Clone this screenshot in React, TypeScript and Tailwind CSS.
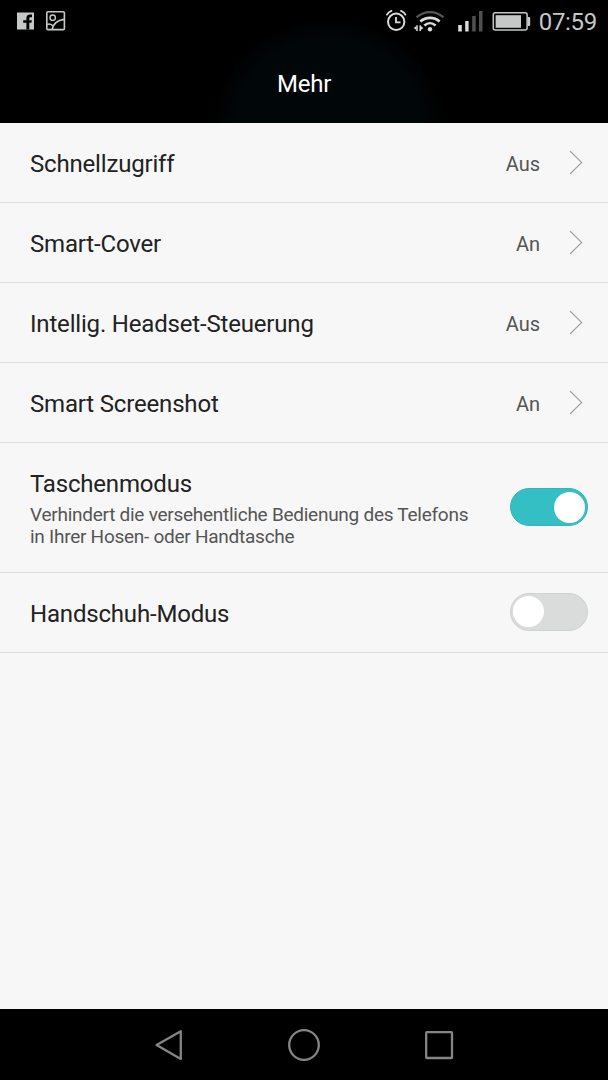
import type { ReactNode } from "react";

function StatusBar() {
  return (
    <div className="flex h-[43px] items-center justify-between pl-4 pr-[11px]">
      <svg width="52" height="43" viewBox="16 0 52 43" fill="none">
        <path d="M17 12.5H34V29.5H17Z" fill="#c6c8c8" />
        <path d="M26.4 29.5V22.8H23.2V20.2H26.4V18.2C26.4 15.9 27.7 14.6 30 14.6H32V17.2H30.5C29.6 17.2 29.3 17.6 29.3 18.4V20.2H31.9L31.4 22.8H29.3V29.5Z" fill="#000" />
        <rect x="46.8" y="11.8" width="17.6" height="17.8" rx="1.2" stroke="#c6c8c8" strokeWidth="1.6" />
        <circle cx="52.7" cy="17.7" r="2.7" stroke="#c6c8c8" strokeWidth="1.4" />
        <path d="M47 24.4C49.5 23.4 51.5 24 53.3 26.2M52 29.5C53.3 23.8 57.5 20.3 64 19.4" stroke="#c6c8c8" strokeWidth="1.6" />
      </svg>

      <div className="flex items-center gap-[7px]">
        <svg width="148" height="43" viewBox="384 0 148 43" fill="none">
          {/* Wecker */}
          <circle cx="396.2" cy="21.8" r="8.2" stroke="#dcdcdc" strokeWidth="2" />
          <path d="M396 17V22.4H400.5" stroke="#dcdcdc" strokeWidth="1.8" />
          <path d="M387 14.6C388 12.8 389.5 11.6 391.4 10.9M401 10.9C402.9 11.6 404.4 12.8 405.4 14.6" stroke="#dcdcdc" strokeWidth="1.9" strokeLinecap="round" />
          {/* WLAN */}
          <path d="M416.6 17.4C424.2 10.4 435.8 10.4 443.4 17.4" stroke="#565656" strokeWidth="2.4" />
          <path d="M420.3 21.5C425.8 16.6 434.2 16.6 439.7 21.5" stroke="#dcdcdc" strokeWidth="2.6" />
          <path d="M424.4 25.4C427.7 22.5 432.3 22.5 435.6 25.4" stroke="#dcdcdc" strokeWidth="2.6" />
          <circle cx="430" cy="29.2" r="2.2" fill="#dcdcdc" />
          <path d="M413.8 28L416.4 26V30ZM423.4 28L420.8 26V30Z" fill="#dcdcdc" />
          <path d="M417 25.2V31M420.2 25.2V31" stroke="#dcdcdc" strokeWidth="1.5" />
          {/* Netz */}
          <path d="M458.2 25H461.8V31.4H458.2ZM465.2 21H468.6V31.4H465.2Z" fill="#dcdcdc" />
          <path d="M472.2 16H475.7V31.4H472.2ZM479 11H482.5V31.4H479Z" fill="#505050" />
          {/* Akku */}
          <rect x="493.3" y="12.8" width="33.8" height="17.2" rx="2" stroke="#c6c8c8" strokeWidth="1.5" />
          <path d="M495.6 15.2H521V27.8H495.6Z" fill="#c6c8c8" />
          <path d="M527.5 17H529.3Q530.2 17 530.2 18V25Q530.2 26 529.3 26H527.5Z" fill="#c6c8c8" />
        </svg>
        <span className="pt-0.5 text-[24px] leading-[41px] tracking-[-0.3px] text-[#c6c8c8]">07:59</span>
      </div>
    </div>
  );
}

function Row({ title, children }: { title: string; children: ReactNode }) {
  return (
    <div className="flex h-20 items-center justify-between border-b border-[#dddddd] pl-[30px] pr-5">
      <span className="pt-0.5 text-[24px] leading-7 tracking-[-0.18px] text-[#222222]">{title}</span>
      {children}
    </div>
  );
}

function Value({ text }: { text: string }) {
  return (
    <div className="flex items-center gap-[29px] pr-[5px]">
      <span className="pt-0.5 text-[20px] leading-7 text-[#555555]">{text}</span>
      <svg width="14" height="26" viewBox="0 0 14 26" fill="none">
        <path d="M1 1L12.7 12.5L1 24" stroke="#a0a0a0" strokeWidth="1.1" />
      </svg>
    </div>
  );
}

function Toggle({ on }: { on?: boolean }) {
  return (
    <div
      className={
        on
          ? "mb-px flex h-[38px] w-[78px] shrink-0 items-center justify-end rounded-full border border-[#36b5b9] bg-[#34bfc4] px-0.5"
          : "mb-0.5 flex h-[38px] w-[78px] shrink-0 items-center rounded-full border border-[#cfd0d0] bg-[#dadcdb] px-0.5"
      }
    >
      <span className="h-[31px] w-[31px] rounded-full bg-white" />
    </div>
  );
}

export default function App() {
  return (
    <div className="flex h-[1080px] w-[608px] flex-col bg-[#f7f7f7] font-['Roboto',sans-serif]">
      <header className="h-[123px] bg-[radial-gradient(ellipse_115px_105px_at_54%_100%,#010609_80%,#000000_100%)]">
        <StatusBar />
        <h1 className="pt-[27px] text-center text-[24px] leading-7 tracking-[-0.2px] text-white">Mehr</h1>
      </header>

      <main className="flex-1">
        <Row title="Schnellzugriff">
          <Value text="Aus" />
        </Row>
        <Row title="Smart-Cover">
          <Value text="An" />
        </Row>
        <Row title="Intellig. Headset-Steuerung">
          <Value text="Aus" />
        </Row>
        <Row title="Smart Screenshot">
          <Value text="An" />
        </Row>

        <div className="flex h-[130px] items-center justify-between border-b border-[#dddddd] pl-[30px] pr-5">
          <div className="pt-[3px]">
            <div className="text-[24px] leading-7 tracking-[-0.18px] text-[#222222]">Taschenmodus</div>
            <p className="mt-1.5 text-[19px] leading-[22px] tracking-[-0.26px] text-[#555555]">
              Verhindert die versehentliche Bedienung des Telefons
              <br />
              in Ihrer Hosen- oder Handtasche
            </p>
          </div>
          <Toggle on />
        </div>

        <Row title="Handschuh-Modus">
          <Toggle />
        </Row>
      </main>

      <nav className="flex h-[71px] justify-center bg-black">
        <svg width="300" height="71" viewBox="154 1009 300 71" fill="none" stroke="#858585" strokeWidth="2.3" strokeLinejoin="round">
          <path d="M156.6 1045L180.8 1031.2V1059Z" />
          <circle cx="304" cy="1045" r="14.8" />
          <rect x="426.2" y="1032.2" width="25.8" height="25.8" rx="0.6" />
        </svg>
      </nav>
    </div>
  );
}
